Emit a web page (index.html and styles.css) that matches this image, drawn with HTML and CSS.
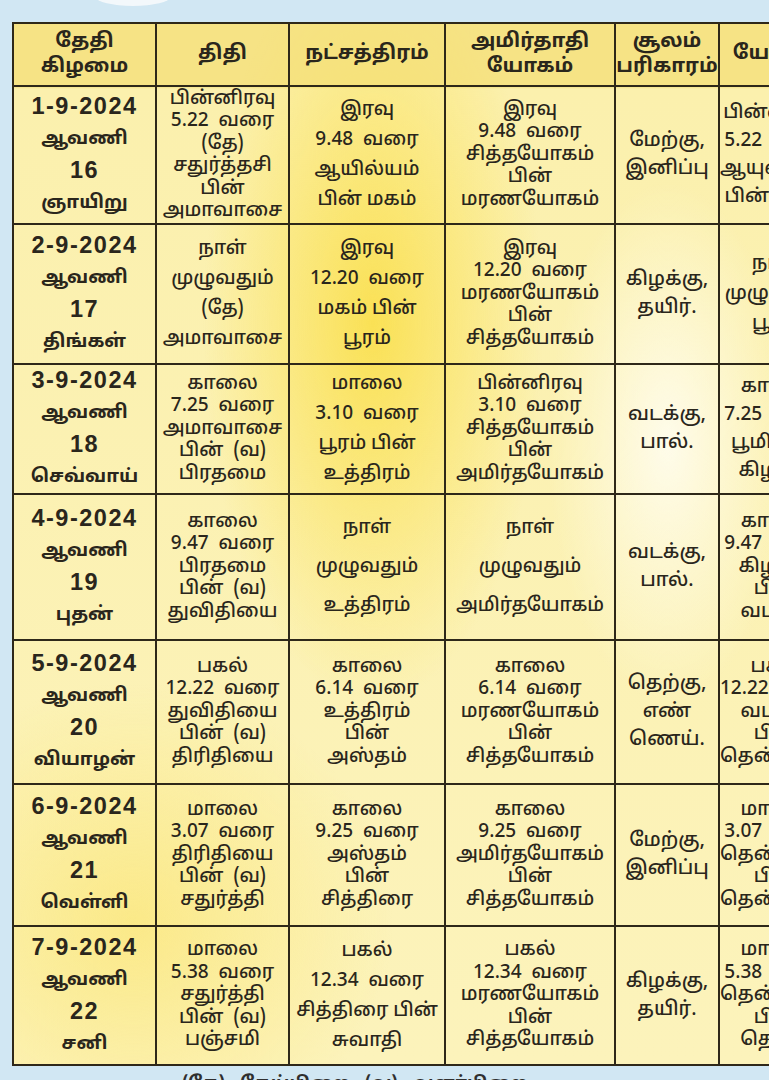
FILE: index.html
```html
<!DOCTYPE html>
<html lang="ta">
<head>
<meta charset="utf-8">
<title>நாள்காட்டி</title>
<link rel="stylesheet" href="styles.css">
</head>
<body>
<div class="page">
  <div class="cloud"></div>
  <table class="cal">
    <colgroup>
      <col class="c1"><col class="c2"><col class="c3"><col class="c4"><col class="c5"><col class="c6">
    </colgroup>
    <thead>
      <tr class="head">
        <th>தேதி<br>கிழமை</th>
        <th>திதி</th>
        <th>நட்சத்திரம்</th>
        <th>அமிர்தாதி<br>யோகம்</th>
        <th>சூலம்<br>பரிகாரம்</th>
        <th>யோகம்</th>
      </tr>
    </thead>
    <tbody>
      <tr class="r1">
        <td class="date"><span class="num">1-9-2024</span><br>ஆவணி<br><span class="num">16</span><br>ஞாயிறு</td>
        <td class="t">பின்னிரவு<br>5.22 &nbsp;வரை<br>(தே)<br>சதுர்த்தசி<br>பின்<br>அமாவாசை</td>
        <td class="s">இரவு<br>9.48 &nbsp;வரை<br>ஆயில்யம்<br>பின் மகம்</td>
        <td class="t">இரவு<br>9.48 &nbsp;வரை<br>சித்தயோகம்<br>பின்<br>மரணயோகம்</td>
        <td class="p">மேற்கு,<br>இனிப்பு</td>
        <td class="s4">பின்னிரவு<br>5.22 &nbsp;வரை<br>ஆயுஷ்மான்<br>பின் பிரீதி</td>
      </tr>
      <tr class="r2">
        <td class="date"><span class="num">2-9-2024</span><br>ஆவணி<br><span class="num">17</span><br>திங்கள்</td>
        <td class="s">நாள்<br>முழுவதும்<br>(தே)<br>அமாவாசை</td>
        <td class="s">இரவு<br>12.20 &nbsp;வரை<br>மகம் பின்<br>பூரம்</td>
        <td class="t">இரவு<br>12.20 &nbsp;வரை<br>மரணயோகம்<br>பின்<br>சித்தயோகம்</td>
        <td class="p">கிழக்கு,<br>தயிர்.</td>
        <td class="s">நாள்<br>முழுவதும்<br>பூரம்</td>
      </tr>
      <tr class="r3">
        <td class="date"><span class="num">3-9-2024</span><br>ஆவணி<br><span class="num">18</span><br>செவ்வாய்</td>
        <td class="t">காலை<br>7.25 &nbsp;வரை<br>அமாவாசை<br>பின் &nbsp;(வ)<br>பிரதமை</td>
        <td class="s">மாலை<br>3.10 &nbsp;வரை<br>பூரம் பின்<br>உத்திரம்</td>
        <td class="t">பின்னிரவு<br>3.10 &nbsp;வரை<br>சித்தயோகம்<br>பின்<br>அமிர்தயோகம்</td>
        <td class="p">வடக்கு,<br>பால்.</td>
        <td class="s4">காலை<br>7.25 &nbsp;வரை<br>பூமி பின்<br>கிழக்கு</td>
      </tr>
      <tr class="r4">
        <td class="date"><span class="num">4-9-2024</span><br>ஆவணி<br><span class="num">19</span><br>புதன்</td>
        <td class="t">காலை<br>9.47 &nbsp;வரை<br>பிரதமை<br>பின் &nbsp;(வ)<br>துவிதியை</td>
        <td class="w">நாள்<br>முழுவதும்<br>உத்திரம்</td>
        <td class="w">நாள்<br>முழுவதும்<br>அமிர்தயோகம்</td>
        <td class="p">வடக்கு,<br>பால்.</td>
        <td class="t">காலை<br>9.47 &nbsp;வரை<br>கிழக்கு<br>பின்<br>வடக்கு</td>
      </tr>
      <tr class="r5">
        <td class="date"><span class="num">5-9-2024</span><br>ஆவணி<br><span class="num">20</span><br>வியாழன்</td>
        <td class="t">பகல்<br>12.22 &nbsp;வரை<br>துவிதியை<br>பின் &nbsp;(வ)<br>திரிதியை</td>
        <td class="t">காலை<br>6.14 &nbsp;வரை<br>உத்திரம்<br>பின்<br>அஸ்தம்</td>
        <td class="t">காலை<br>6.14 &nbsp;வரை<br>மரணயோகம்<br>பின்<br>சித்தயோகம்</td>
        <td class="p">தெற்கு,<br>எண்<br>ணெய்.</td>
        <td class="t">பகல்<br>12.22 &nbsp;வரை<br>வடக்கு<br>பின்<br>தென்மேற்கு</td>
      </tr>
      <tr class="r6">
        <td class="date"><span class="num">6-9-2024</span><br>ஆவணி<br><span class="num">21</span><br>வெள்ளி</td>
        <td class="t">மாலை<br>3.07 &nbsp;வரை<br>திரிதியை<br>பின் &nbsp;(வ)<br>சதுர்த்தி</td>
        <td class="t">காலை<br>9.25 &nbsp;வரை<br>அஸ்தம்<br>பின்<br>சித்திரை</td>
        <td class="t">காலை<br>9.25 &nbsp;வரை<br>அமிர்தயோகம்<br>பின்<br>சித்தயோகம்</td>
        <td class="p">மேற்கு,<br>இனிப்பு</td>
        <td class="t">மாலை<br>3.07 &nbsp;வரை<br>தென்மேற்கு<br>பின்<br>தென்கிழக்கு</td>
      </tr>
      <tr class="r7">
        <td class="date"><span class="num">7-9-2024</span><br>ஆவணி<br><span class="num">22</span><br>சனி</td>
        <td class="t">மாலை<br>5.38 &nbsp;வரை<br>சதுர்த்தி<br>பின் &nbsp;(வ)<br>பஞ்சமி</td>
        <td class="s">பகல்<br>12.34 &nbsp;வரை<br>சித்திரை பின்<br>சுவாதி</td>
        <td class="t">பகல்<br>12.34 &nbsp;வரை<br>மரணயோகம்<br>பின்<br>சித்தயோகம்</td>
        <td class="p">கிழக்கு,<br>தயிர்.</td>
        <td class="t">மாலை<br>5.38 &nbsp;வரை<br>தென்கிழக்கு<br>பின்<br>தெற்கு</td>
      </tr>
    </tbody>
  </table>
  <p class="note">(தே) - தேய்பிறை &nbsp; (வ) - வளர்பிறை</p>
</div>
</body>
</html>
```
FILE: styles.css
```css
html, body {
  margin: 0;
  padding: 0;
}
body {
  background: #d1e7f3;
  width: 769px;
  height: 1080px;
  overflow: hidden;
  font-family: "Noto Sans Tamil", "Noto Sans", "DejaVu Sans", sans-serif;
  color: #2a261c;
}
.page {
  position: relative;
  padding: 22px 0 0 12px;
  width: 860px;
}
.cloud {
  position: absolute;
  left: 96px;
  top: -12px;
  width: 74px;
  height: 18px;
  border-radius: 50%;
  background: #f3f8fb;
}
.cal {
  border-collapse: collapse;
  table-layout: fixed;
  width: 820px;
  border: 2.5px solid #2e2819;
  background:
    radial-gradient(ellipse 170px 380px at 360px 300px, rgba(250, 224, 80, 0.95), rgba(250, 224, 80, 0) 100%),
    radial-gradient(ellipse 120px 260px at 655px 420px, rgba(255, 253, 240, 0.9), rgba(255, 253, 240, 0) 100%),
    radial-gradient(ellipse 260px 240px at 120px 900px, rgba(250, 228, 110, 0.65), rgba(250, 228, 110, 0) 100%),
    linear-gradient(180deg, #f5e48c 0, #f5e48c 64px, #fbf0ad 66px, #fcf3bb 100%);
}
.c1 { width: 143px; }
.c2 { width: 133px; }
.c3 { width: 156px; }
.c4 { width: 170px; }
.c5 { width: 104px; }
.c6 { width: 114px; }
.cal th, .cal td {
  border: 2px solid #2e2819;
  text-align: center;
  vertical-align: middle;
  padding: 0;
  overflow: visible;
  white-space: nowrap;
}
.cal th {
  font-size: 20px;
  font-weight: 700;
  line-height: 25px;
  height: 61px;
}
.head th { background: rgba(246, 226, 128, 0.55); }
.cal td {
  font-size: 19px;
  font-weight: 500;
  line-height: 22.5px;
}
.cal td.date {
  font-weight: 700;
  font-size: 18.5px;
  line-height: 30px;
}
.cal td.date .num {
  font-family: "Liberation Sans", Arial, sans-serif;
  font-size: 23.5px;
  letter-spacing: 1.5px;
}
.cal td.s { line-height: 30px; }
.cal td.s4 { line-height: 28px; }
.cal td.w { line-height: 39px; }
.cal td.p { line-height: 28px; font-size: 19.5px; }
.r1 td { height: 136px; }
.r2 td { height: 138px; }
.r3 td { height: 124px; }
.r4 td { height: 144px; }
.r5 td { height: 142px; }
.r6 td { height: 140px; }
.r7 td { height: 137px; }
.note {
  margin: 7px 0 0 170px;
  font-size: 18px;
  font-weight: 700;
  color: #2f2f2f;
}
```
